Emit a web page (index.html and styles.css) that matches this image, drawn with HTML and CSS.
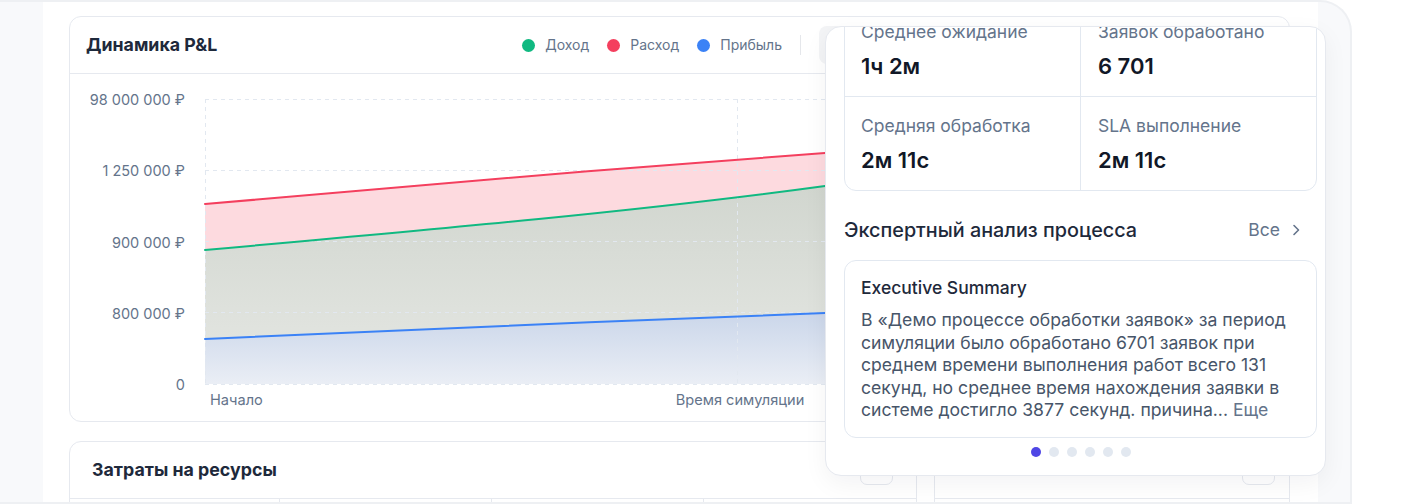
FILE: index.html
```html
<!DOCTYPE html>
<html lang="ru">
<head>
<meta charset="utf-8">
<title>Динамика P&amp;L</title>
<link rel="stylesheet" href="styles.css">
</head>
<body>
<div class="shell">
  <div class="side"></div>
  <main class="main">
    <section class="card pl">
      <header class="card-head pl-head">
        <h2 class="card-title">Динамика P&amp;L</h2>
        <div class="head-tools">
          <ul class="legend">
            <li><span class="dot dot-green"></span>Доход</li>
            <li><span class="dot dot-red"></span>Расход</li>
            <li><span class="dot dot-blue"></span>Прибыль</li>
          </ul>
          <span class="sep"></span>
          <div class="seg"></div>
        </div>
      </header>
      <div class="chart">
        <svg class="plot" width="1219" height="347" viewBox="70 74 1219 347" xmlns="http://www.w3.org/2000/svg">
          <defs>
            <linearGradient id="gGreen" x1="0" y1="186" x2="0" y2="384" gradientUnits="userSpaceOnUse">
              <stop offset="0" stop-color="#d1d6cf"/>
              <stop offset="1" stop-color="#e6e8e4"/>
            </linearGradient>
            <linearGradient id="gBlue" x1="0" y1="300" x2="0" y2="384" gradientUnits="userSpaceOnUse">
              <stop offset="0" stop-color="#c5d2e8"/>
              <stop offset="1" stop-color="#eaeef5"/>
            </linearGradient>
          </defs>
          <path d="M205,204 C400,186 620,168 825,153 C1000,140 1150,130 1269,122 L1269,384 L205,384 Z" fill="#fddadf"/>
          <path d="M205,250 C450,228 650,210 825,186 C930,171.6 1100,155 1269,140 L1269,384 L205,384 Z" fill="url(#gGreen)"/>
          <path d="M205,339 C400,331 620,320 825,313 C1000,307 1150,303 1269,300 L1269,384 L205,384 Z" fill="url(#gBlue)"/>
          <g class="grid">
            <line x1="205" y1="99.5" x2="1269" y2="99.5"/>
            <line x1="205" y1="170.5" x2="1269" y2="170.5"/>
            <line x1="205" y1="241.5" x2="1269" y2="241.5"/>
            <line x1="205" y1="312.5" x2="1269" y2="312.5"/>
            <line x1="205" y1="384.5" x2="1269" y2="384.5"/>
            <line x1="205.5" y1="99" x2="205.5" y2="384"/>
            <line x1="737.5" y1="99" x2="737.5" y2="384"/>
            <line x1="1269.5" y1="99" x2="1269.5" y2="384"/>
          </g>
          <path class="ln ln-red" d="M205,204 C400,186 620,168 825,153 C1000,140 1150,130 1269,122"/>
          <path class="ln ln-green" d="M205,250 C450,228 650,210 825,186 C930,171.6 1100,155 1269,140"/>
          <path class="ln ln-blue" d="M205,339 C400,331 620,320 825,313 C1000,307 1150,303 1269,300"/>
          <g class="ylab">
            <text x="185" y="99">98 000 000 ₽</text>
            <text x="185" y="170">1 250 000 ₽</text>
            <text x="185" y="242">900 000 ₽</text>
            <text x="185" y="313">800 000 ₽</text>
            <text x="185" y="384">0</text>
          </g>
          <g class="xlab">
            <text x="210" y="400">Начало</text>
            <text x="740" y="400" text-anchor="middle">Время симуляции</text>
          </g>
        </svg>
      </div>
    </section>

    <div class="row2">
      <section class="card costs">
        <header class="card-head costs-head">
          <h2 class="card-title">Затраты на ресурсы</h2>
          <button class="icon-btn" type="button"></button>
        </header>
        <div class="table-head">
          <span></span><span></span><span></span><span></span>
        </div>
      </section>
      <section class="card load">
        <header class="card-head load-head">
          <span class="head-spacer"></span>
          <button class="icon-btn" type="button"></button>
        </header>
        <div class="table-head one"><span></span></div>
      </section>
    </div>
  </main>
  <div class="rail"></div>
</div>

<aside class="panel">
  <div class="panel-body">
    <div class="stats">
      <div class="stat">
        <div class="stat-label">Среднее ожидание</div>
        <div class="stat-value">1ч 2м</div>
      </div>
      <div class="stat">
        <div class="stat-label">Заявок обработано</div>
        <div class="stat-value">6 701</div>
      </div>
      <div class="stat">
        <div class="stat-label">Средняя обработка</div>
        <div class="stat-value">2м 11с</div>
      </div>
      <div class="stat">
        <div class="stat-label">SLA выполнение</div>
        <div class="stat-value">2м 11с</div>
      </div>
    </div>

    <div class="section-head">
      <h3 class="section-title">Экспертный анализ процесса</h3>
      <a class="all-link" href="#">Все
        <svg class="chev" width="8" height="12" viewBox="0 0 8 12" xmlns="http://www.w3.org/2000/svg"><polyline points="2,1.5 6.5,6 2,10.5" fill="none" stroke="#64748b" stroke-width="1.6" stroke-linecap="round" stroke-linejoin="round"/></svg>
      </a>
    </div>

    <article class="exec">
      <h4 class="exec-title">Executive Summary</h4>
      <p class="exec-text">В «Демо процессе обработки заявок» за период симуляции было обработано 6701 заявок при среднем времени выполнения работ всего 131 секунд, но среднее время нахождения заявки в системе достигло 3877 секунд. причина... <span class="more">Еще</span></p>
    </article>

    <div class="pager">
      <span class="pdot active"></span>
      <span class="pdot"></span>
      <span class="pdot"></span>
      <span class="pdot"></span>
      <span class="pdot"></span>
      <span class="pdot"></span>
    </div>
  </div>
</aside>
</body>
</html>
```

FILE: styles.css
```css
* { box-sizing: border-box; }

html, body {
  margin: 0;
  padding: 0;
}

body {
  font-family: Inter, "Noto Sans", "Liberation Sans", sans-serif;
  background: #ffffff;
  color: #1e293b;
  width: 1424px;
  height: 504px;
  overflow: hidden;
  position: relative;
}

.shell {
  display: flex;
  width: 1352px;
  height: 504px;
  background: #f8f9fb;
  border-top: 2px solid #eef0f3;
  border-bottom: 2px solid #eef0f3;
  border-right: 2px solid #eef0f3;
  border-top-right-radius: 32px;
  overflow: hidden;
}

.side {
  width: 43px;
  flex: none;
}

.main {
  width: 1275px;
  flex: none;
  height: 100%;
  background: #ffffff;
  padding: 14px 28px 0 26px;
  overflow: hidden;
}

.rail {
  flex: 1;
}

/* Cards */
.card {
  background: #ffffff;
  border: 1px solid #e6e9ef;
  border-radius: 12px;
}

.card-head {
  display: flex;
  align-items: center;
  justify-content: space-between;
  height: 57px;
  padding: 0 18px;
  border-bottom: 1px solid #e6e9ef;
}

.pl-head {
  padding: 0 18px 0 16px;
}

.card-title {
  margin: 0;
  font-size: 17.8px;
  font-weight: 700;
  line-height: 24px;
  color: #1e293b;
}

.head-tools {
  display: flex;
  align-items: center;
  gap: 18px;
}

.legend {
  display: flex;
  align-items: center;
  gap: 18px;
  margin: 0;
  padding: 0;
  list-style: none;
}

.legend li {
  display: flex;
  align-items: center;
  gap: 10px;
  font-size: 14px;
  line-height: 20px;
  color: #64748b;
}

.dot {
  width: 13px;
  height: 13px;
  border-radius: 50%;
  display: inline-block;
}

.dot-green { background: #10b981; }
.dot-red { background: #f43f5e; }
.dot-blue { background: #3b82f6; }

.sep {
  width: 1px;
  height: 20px;
  background: #e5e7eb;
}

.seg {
  width: 452px;
  height: 38px;
  border-radius: 8px;
  background: #f3f4f6;
}

.chart {
  height: 347px;
}

.plot {
  display: block;
}

.grid line {
  stroke: #e2e8f0;
  stroke-width: 1;
  stroke-dasharray: 4 4;
}

.ln {
  fill: none;
  stroke-width: 2;
  stroke-linecap: round;
}

.ln-red { stroke: #f43f5e; }
.ln-green { stroke: #10b981; }
.ln-blue { stroke: #3b82f6; }

.ylab text {
  font-size: 14.5px;
  fill: #64748b;
  text-anchor: end;
  dominant-baseline: central;
}

.xlab text {
  font-size: 14.6px;
  fill: #64748b;
  dominant-baseline: central;
}

/* Second row */
.row2 {
  display: flex;
  gap: 17px;
  margin-top: 19px;
}

.costs {
  width: 848px;
  flex: none;
}

.load {
  flex: 1;
}

.costs-head {
  padding: 0 23px 0 22px;
}

.load-head {
  padding: 0 14px 0 18px;
}

.head-spacer {
  flex: 1;
}

.icon-btn {
  width: 33px;
  height: 30px;
  border: 1px solid #e6e9ef;
  border-radius: 7px;
  background: #ffffff;
  padding: 0;
}

.table-head {
  display: grid;
  grid-template-columns: 210px 212px 212px 1fr;
  height: 40px;
}

.table-head span {
  border-right: 1px solid #e6e9ef;
}

.table-head span:last-child {
  border-right: none;
}

.table-head.one {
  grid-template-columns: 1fr;
}

/* Overlay panel */
.panel {
  position: absolute;
  left: 825px;
  top: 26px;
  width: 501px;
  height: 450px;
  background: #ffffff;
  border: 1px solid #e6e9ef;
  border-radius: 16px;
  box-shadow: 0 8px 24px rgba(15, 23, 42, 0.05);
  overflow: hidden;
  padding: 0 8px 0 18px;
}

.panel-body {
  margin-top: -25px;
}

.stats {
  display: grid;
  grid-template-columns: 236px 1fr;
  border: 1px solid #e2e8f0;
  border-radius: 12px;
}

.stat {
  padding: 17px 16px 16px 16px;
}

.stat:nth-child(odd) {
  border-right: 1px solid #e2e8f0;
}

.stat:nth-child(-n+2) {
  border-bottom: 1px solid #e2e8f0;
}

.stat:nth-child(even) {
  padding-left: 17px;
}

.stat-label {
  font-size: 17.5px;
  line-height: 24px;
  color: #64748b;
}

.stat-value {
  margin-top: 8px;
  font-size: 22px;
  line-height: 28px;
  font-weight: 600;
  color: #111827;
}

.section-head {
  display: flex;
  align-items: center;
  justify-content: space-between;
  height: 26px;
  margin-top: 26px;
  padding-right: 17px;
}

.section-title {
  margin: 0;
  font-size: 19.8px;
  line-height: 26px;
  font-weight: 500;
  color: #1e293b;
}

.all-link {
  display: flex;
  align-items: center;
  gap: 12px;
  font-size: 17.5px;
  line-height: 24px;
  color: #64748b;
  text-decoration: none;
}

.chev {
  display: block;
}

.exec {
  margin-top: 17px;
  border: 1px solid #e2e8f0;
  border-radius: 12px;
  padding: 16px 16px 15px 16px;
}

.exec-title {
  margin: 0;
  font-size: 17.5px;
  line-height: 22px;
  font-weight: 500;
  color: #1e293b;
}

.exec-text {
  margin: 10px 0 0 0;
  font-size: 17.6px;
  line-height: 22.5px;
  color: #475569;
}

.more {
  color: #64748b;
}

.pager {
  display: flex;
  justify-content: center;
  gap: 8px;
  margin-top: 9px;
}

.pdot {
  width: 10px;
  height: 10px;
  border-radius: 50%;
  background: #e2e8f0;
}

.pdot.active {
  background: #4f46e5;
}
```
